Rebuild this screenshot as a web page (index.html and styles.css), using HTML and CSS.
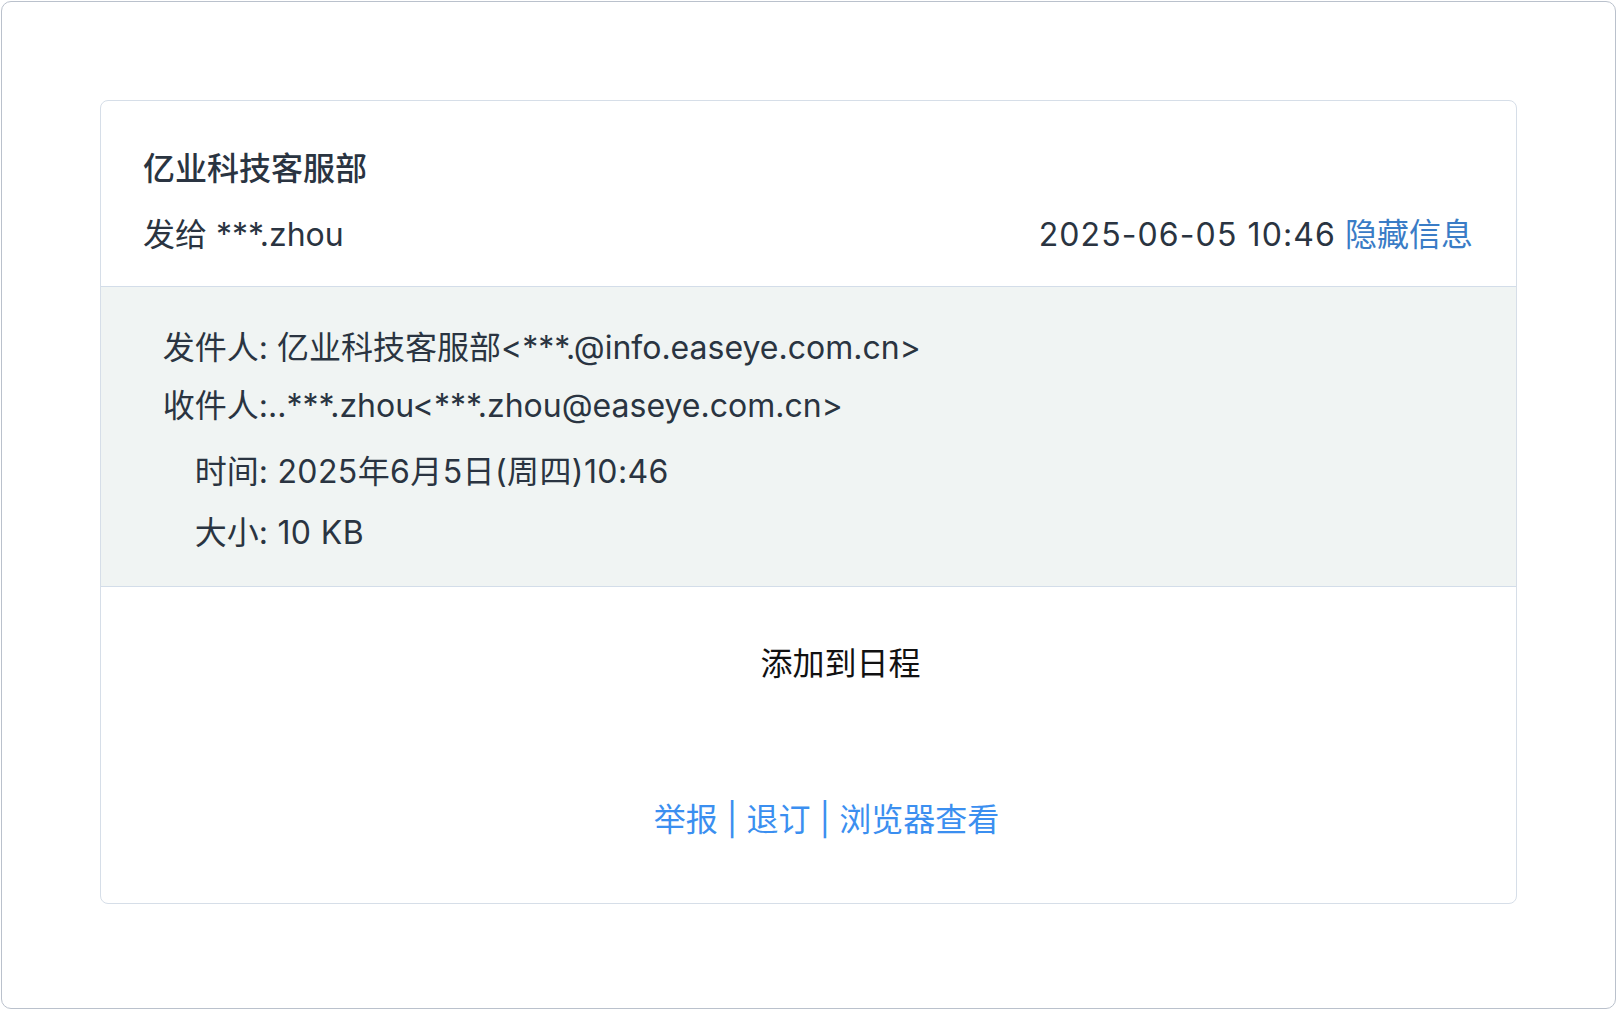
FILE: index.html
```html
<!DOCTYPE html>
<html lang="zh-CN">

<head>
    <meta charset="UTF-8">
    <meta name="viewport" content="width=device-width, initial-scale=1.0">
    <title>亿业科技客服部</title>
    <link rel="stylesheet" href="styles.css">
</head>

<body>
    <div class="frame">
        <div class="mail">
            <div class="mail-head">
                <div class="sender-name">亿业科技客服部</div>
                <div class="head-row">
                    <span>发给 ***.zhou</span>
                    <span><span class="date">2025-06-05 10:46</span> <a class="toggle" href="#">隐藏信息</a></span>
                </div>
            </div>

            <div class="details">
                <div class="detail-row">
                    <span class="label">发件人:</span>
                    <span class="value">&nbsp;亿业科技客服部&lt;***.@info.easeye.com.cn&gt;</span>
                </div>
                <div class="detail-row">
                    <span class="label">收件人:</span>
                    <span class="value">..***.zhou&lt;***.zhou@easeye.com.cn&gt;</span>
                </div>
                <div class="detail-row time">
                    <span class="label">时间:</span>
                    <span class="value num">&nbsp;2025年6月5日(周四)10:46</span>
                </div>
                <div class="detail-row size">
                    <span class="label">大小:</span>
                    <span class="value num">&nbsp;10 KB</span>
                </div>
            </div>

            <div class="mail-body">
                <div class="schedule">添加到日程</div>
                <div class="links">
                    <a href="#">举报</a> | <a href="#">退订</a> | <a href="#">浏览器查看</a>
                </div>
            </div>
        </div>
    </div>
</body>

</html>
```

FILE: styles.css
```css
body {
    margin: 0;
    background: #fff;
    font-family: "Inter", "Noto Sans CJK SC", sans-serif;
    font-size: 32px;
    color: #2a3441;
}

a {
    text-decoration: none;
}

.frame {
    margin: 1px 1px 0 1px;
    width: 1615px;
    height: 1008px;
    box-sizing: border-box;
    padding: 98px 98px 0 98px;
    border: 1px solid #bac1cc;
    border-radius: 10px;
}

.mail {
    border: 1px solid #d6dee8;
    border-radius: 8px;
    overflow: hidden;
}

.mail-head {
    padding: 46px 43px 29px 42px;
    border-bottom: 1px solid #d3dde9;
    line-height: 44px;
}

.sender-name {
    font-weight: 500;
    margin-bottom: 22px;
}

.head-row {
    display: flex;
    justify-content: space-between;
}

.date {
    letter-spacing: 1.1px;
}

.toggle {
    color: #3a7cc6;
}

.details {
    background: #f0f4f3;
    border-bottom: 1px solid #d3dde9;
    padding: 32px 0 24px 61px;
    line-height: 58px;
}

.detail-row {
    display: flex;
}

.detail-row .label {
    width: 106px;
    text-align: right;
}

.detail-row .num {
    letter-spacing: 0.4px;
}

.detail-row.time {
    margin-top: 8px;
}

.detail-row.size {
    margin-top: 3px;
}

.mail-body {
    padding: 55px 0 61px;
    line-height: 44px;
    text-align: center;
}

.schedule {
    color: #111;
    padding-left: 64px;
    margin-bottom: 112px;
}

.links {
    color: #3b8ff0;
    padding-left: 36px;
}

.links a {
    color: #3b8ff0;
}
```
